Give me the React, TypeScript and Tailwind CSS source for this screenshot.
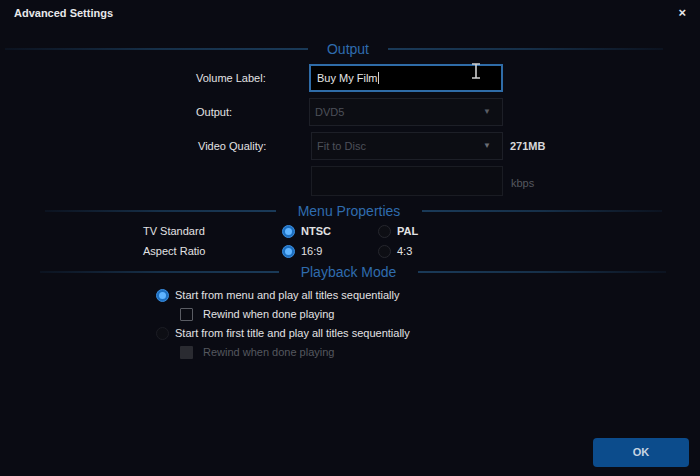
import React from 'react';

// section title with a rule on each side; rules are placed by their pixel ends
function Heading({ title, l1, l2, r1, r2 }: { title: string; l1: number; l2: number; r1: number; r2: number }) {
  return (
    <div className="flex items-center h-[18px]">
      <div style={{ width: l1 }} />
      <div style={{ width: l2 - l1 }} className="h-[2px] bg-gradient-to-r from-[#0c1320] via-[#163049] to-[#1a3a58]" />
      <div style={{ width: r1 - l2 }} className="text-center text-[14px] leading-none text-[#2f6cae] whitespace-nowrap">
        {title}
      </div>
      <div style={{ width: r2 - r1 }} className="h-[2px] bg-gradient-to-r from-[#1a3a58] via-[#163049] to-[#0c1320]" />
    </div>
  );
}

function Radio({ on, dim }: { on?: boolean; dim?: boolean }) {
  if (on) {
    return (
      <span className="inline-flex items-center justify-center w-[13px] h-[13px] rounded-full bg-[#1d6fc0] border border-[#3b8ee0]">
        <span className="w-[7px] h-[7px] rounded-full bg-[#5fb4ff]" />
      </span>
    );
  }
  return (
    <span
      className={
        'inline-block w-[13px] h-[13px] rounded-full border ' +
        (dim ? 'border-[#1c1d24] bg-[#0d0e14]' : 'border-[#26272e] bg-[#0d0e14]')
      }
    />
  );
}

export default function App() {
  return (
    <div
      className="relative w-[700px] h-[476px] bg-[#0a0b13] text-[#e2e2e4] text-[11px] overflow-hidden"
      style={{ fontFamily: '"Liberation Sans", Arial, sans-serif' }}
    >
      {/* title bar */}
      <div className="flex items-center h-[26px] pl-[14px] pr-[14px]">
        <span className="flex-1 font-bold text-[11px] text-[#e8e8ea]">Advanced Settings</span>
        <span className="font-bold text-[13px] text-[#e8e8ea]">×</span>
      </div>

      <div className="mt-[13px] pt-[1px]">
        <Heading title="Output" l1={5} l2={308} r1={388} r2={663} />
      </div>

      {/* output form */}
      <div className="flex flex-col gap-[6px] mt-[6px] pl-[196px]">
        <div className="flex items-center">
          <span className="w-[113px]">Volume Label:</span>
          <div className="flex items-center w-[194px] h-[28px] border-2 border-[#2f6ca8] bg-black px-[6px]">
            <span className="text-[#e6e6e6]">Buy My Film</span>
            <span className="w-px h-[12px] bg-[#d0d0d0]" />
          </div>
        </div>
        <div className="flex items-center">
          <span className="w-[113px]">Output:</span>
          <div className="flex items-center w-[194px] h-[28px] border border-[#1d1f27] bg-[#0c0d13] px-[5px]">
            <span className="flex-1 text-[#4d5059]">DVD5</span>
            <span className="text-[8px] mr-[6px] text-[#5a5d65]">▼</span>
          </div>
        </div>
        <div className="flex items-center">
          <span className="w-[115px] pl-[2px]">Video Quality:</span>
          <div className="flex items-center w-[192px] h-[28px] border border-[#1d1f27] bg-[#0c0d13] px-[5px]">
            <span className="flex-1 text-[#4d5059]">Fit to Disc</span>
            <span className="text-[8px] mr-[6px] text-[#6a6d75]">▼</span>
          </div>
          <span className="ml-[7px] font-bold text-[#d8d8da]">271MB</span>
        </div>
        <div className="flex items-center">
          <span className="w-[115px]" />
          <div className="w-[192px] h-[30px] border border-[#1a1c23] bg-[#0b0c12]" />
          <span className="ml-[8px] mt-[4px] text-[#55585f]">kbps</span>
        </div>
      </div>

      <div className="mt-[6px]">
        <Heading title="Menu Properties" l1={45} l2={276} r1={422} r2={662} />
      </div>

      <div className="flex flex-col mt-[1px] pl-[143px]">
        <div className="flex items-center h-[20px]">
          <span className="w-[139px]">TV Standard</span>
          <Radio on />
          <span className="ml-[6px] w-[77px] font-semibold">NTSC</span>
          <Radio />
          <span className="ml-[6px] font-semibold">PAL</span>
        </div>
        <div className="flex items-center h-[20px]">
          <span className="w-[139px]">Aspect Ratio</span>
          <Radio on />
          <span className="ml-[6px] w-[77px]">16:9</span>
          <Radio />
          <span className="ml-[6px]">4:3</span>
        </div>
      </div>

      <div className="mt-[2px]">
        <Heading title="Playback Mode" l1={40} l2={279} r1={418} r2={666} />
      </div>

      <div className="flex flex-col mt-[5px] pl-[156px]">
        <div className="flex items-center h-[19px]">
          <Radio on />
          <span className="ml-[6px]">Start from menu and play all titles sequentially</span>
        </div>
        <div className="flex items-center h-[19px] pl-[24px]">
          <span className="w-[13px] h-[13px] border border-[#5a5c63] bg-[#0a0b12] rounded-[1px]" />
          <span className="ml-[10px]">Rewind when done playing</span>
        </div>
        <div className="flex items-center h-[19px]">
          <Radio dim />
          <span className="ml-[6px]">Start from first title and play all titles sequentially</span>
        </div>
        <div className="flex items-center h-[19px] pl-[24px]">
          <span className="w-[13px] h-[13px] bg-[#2a2b31] rounded-[1px]" />
          <span className="ml-[10px] text-[#55585f]">Rewind when done playing</span>
        </div>
      </div>

      <div className="absolute left-[593px] top-[438px]">
        <button className="w-[96px] h-[29px] rounded-[4px] bg-[#0c4c8c] text-[#c8d4e2] text-[11px] font-bold">
          OK
        </button>
      </div>

      {/* mouse text cursor over the volume field */}
      <svg className="absolute left-[471px] top-[63px]" width="10" height="16" viewBox="0 0 10 16">
        <path d="M1 1h8M5 1v14M1 15h8" stroke="#cfcfcf" strokeWidth="1.6" fill="none" />
      </svg>
    </div>
  );
}
